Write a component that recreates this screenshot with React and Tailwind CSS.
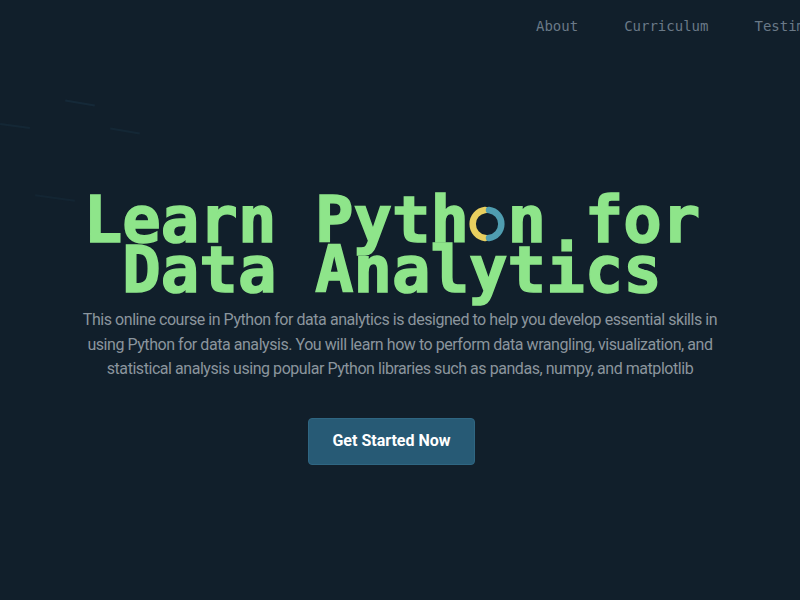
import React from 'react';

function Ring() {
  return (
    <span className="inline-block w-[1ch] relative align-baseline">
      <span className="invisible">o</span>
      <svg
        className="absolute left-[0px] top-[11px]"
        width="36"
        height="36"
        viewBox="0 0 36 36"
        fill="none"
        strokeWidth="6.5"
        strokeLinecap="round"
      >
        <path d="M16 4.1 A14 14 0 0 0 16 31.9" stroke="#e8cf5f" />
        <path d="M20 4.1 A14 14 0 0 1 20 31.9" stroke="#4f9db0" />
      </svg>
    </span>
  );
}

export default function App() {
  return (
    <div className="w-[800px] h-[600px] overflow-hidden bg-[#111f2b] relative">
      <div className="absolute left-[65px] top-[102px] w-[30px] h-[2px] bg-[#1a3446] opacity-50 rotate-[10deg]" />
      <div className="absolute left-[110px] top-[130px] w-[30px] h-[2px] bg-[#1a3446] opacity-40 rotate-[10deg]" />
      <div className="absolute left-[0px] top-[125px] w-[30px] h-[2px] bg-[#1a3446] opacity-40 rotate-[8deg]" />
      <div className="absolute left-[35px] top-[197px] w-[40px] h-[2px] bg-[#1a3446] opacity-30 rotate-[8deg]" />

      <nav
        className="relative flex gap-[46px] pl-[536px] pt-[16px] whitespace-nowrap text-[14px] text-[#6a7987]"
        style={{ fontFamily: '"DejaVu Sans Mono", monospace' }}
      >
        <span>About</span>
        <span>Curriculum</span>
        <span>Testimonials</span>
      </nav>

      <section className="relative flex flex-col items-center pt-[158px]">
        <h1
          className="mr-[16px] text-[64px] leading-[50px] font-bold text-[#8ee58a] text-center whitespace-nowrap [-webkit-text-stroke:1.5px_#8ee58a] [paint-order:stroke_fill]"
          style={{ fontFamily: '"DejaVu Sans Mono", monospace' }}
        >
          Learn Pyth<Ring />n for
          <br />
          Data Analytics
        </h1>
        <p
          className="mt-[13px] text-center text-[16px] leading-[24.5px] tracking-[-0.45px] text-[#8b959d] whitespace-nowrap"
          style={{ fontFamily: 'Roboto, "Liberation Sans", sans-serif' }}
        >
          This online course in Python for data analytics is designed to help you develop essential skills in
          <br />
          using Python for data analysis. You will learn how to perform data wrangling, visualization, and
          <br />
          statistical analysis using popular Python libraries such as pandas, numpy, and matplotlib
        </p>
        <button
          className="mr-[17px] mt-[36px] w-[167px] h-[47px] rounded-[4px] bg-[#275a75] border border-[#2f6682] text-white text-[16px] font-bold"
          style={{ fontFamily: 'Roboto, "Liberation Sans", sans-serif' }}
        >
          Get Started Now
        </button>
      </section>
    </div>
  );
}
